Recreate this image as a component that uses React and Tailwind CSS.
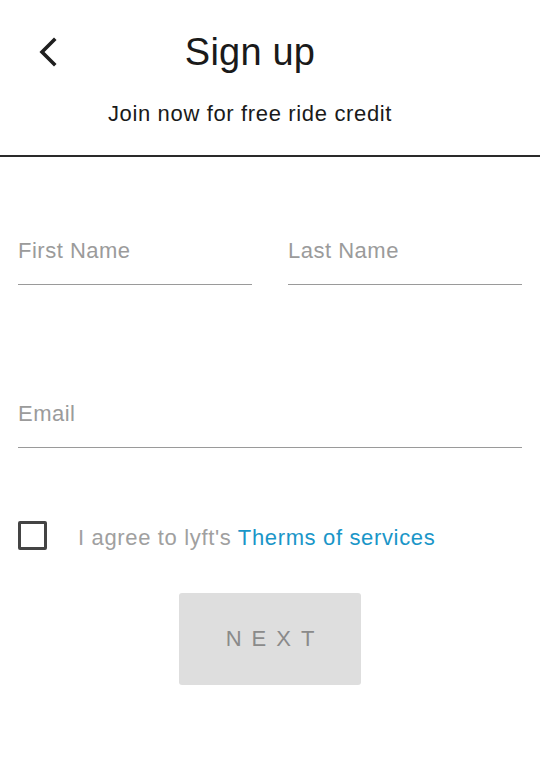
export default function App() {
  return (
    <div className="w-[540px] h-[757px] bg-white [font-family:'Liberation_Sans',Arial,sans-serif] overflow-hidden">
      <div className="flex items-center pt-[30px] pl-[37px] pr-[97px]">
        <svg width="20" height="30" viewBox="0 0 20 30" className="shrink-0">
          <path d="M17 3 L5 15 L17 27" fill="none" stroke="#1f1f1f" strokeWidth="3.6" strokeLinecap="square" />
        </svg>
        <h1 className="flex-1 text-center text-[38px] leading-[44px] tracking-[0.2px] text-[#1a1a1a]">Sign up</h1>
      </div>
      <p className="mt-[27px] pr-[40px] text-center text-[22px] leading-[26px] tracking-[0.65px] text-[#1a1a1a]">
        Join now for free ride credit
      </p>
      <div className="mt-[28px] h-[1.5px] bg-[#2a2a2a]" />
      <div className="px-[18px]">
        <div className="mt-[81px] grid grid-cols-2 gap-[36px]">
          <div className="pb-[20px] border-b-[1.5px] border-[#9a9a9a] text-[22px] leading-[26px] tracking-[0.5px] text-[#9b9b9b]">
            First Name
          </div>
          <div className="pb-[20px] border-b-[1.5px] border-[#9a9a9a] text-[22px] leading-[26px] tracking-[0.5px] text-[#9b9b9b]">
            Last Name
          </div>
        </div>
        <div className="mt-[116px] pb-[20px] border-b-[1.5px] border-[#9a9a9a] text-[22px] leading-[26px] tracking-[0.5px] text-[#9b9b9b]">
          Email
        </div>
        <div className="mt-[73px] flex items-center">
          <div className="w-[29px] h-[29px] border-[3px] border-[#444] rounded-[2px] shrink-0" />
          <p className="ml-[31px] text-[22px] leading-[26px] tracking-[0.65px] text-[#a0a0a0] mt-[4px]">
            I agree to lyft's <span className="text-[#1a96c8]">Therms of services</span>
          </p>
        </div>
      </div>
      <div className="mt-[42px] flex justify-center">
        <button className="w-[182px] h-[92px] bg-[#dedede] rounded-[3px] flex items-center justify-center text-[22px] tracking-[10px] pl-[10px] text-[#8a8a8a]">
          NEXT
        </button>
      </div>
    </div>
  );
}
